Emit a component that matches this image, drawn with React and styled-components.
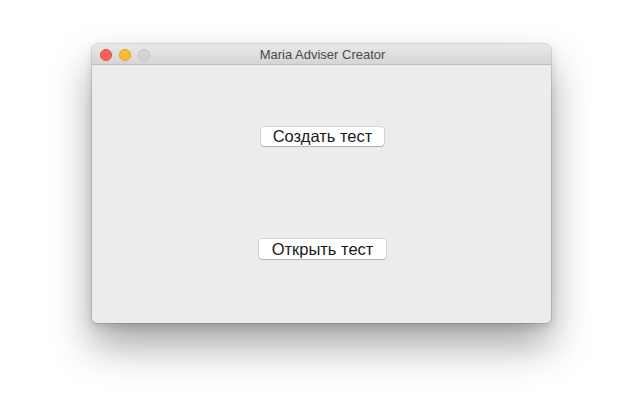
import React from "react";
import styled, { createGlobalStyle } from "styled-components";

const GlobalStyle = createGlobalStyle`
  html, body {
    margin: 0;
    padding: 0;
    background: #ffffff;
  }
  body {
    font-family: "Liberation Sans", Arial, sans-serif;
  }
`;

const Desktop = styled.div`
  width: 643px;
  height: 402px;
  padding: 44px 0 0 92px;
  box-sizing: border-box;
  overflow: hidden;
`;

const Window = styled.div`
  width: 459px;
  height: 279px;
  display: flex;
  flex-direction: column;
  background: #ececec;
  border-radius: 5px;
  box-shadow: 0 0 0 0.5px rgba(0, 0, 0, 0.22), 0 22px 40px rgba(0, 0, 0, 0.36),
    0 4px 10px rgba(0, 0, 0, 0.12);
  overflow: hidden;
`;

const TitleBar = styled.div`
  position: relative;
  height: 20px;
  flex: none;
  display: flex;
  align-items: center;
  justify-content: center;
  background: linear-gradient(#e9e9e9, #d5d5d5);
  border-bottom: 1px solid #bdbdbd;
`;

const Lights = styled.div`
  position: absolute;
  left: 8px;
  top: 5px;
  display: flex;
  gap: 7px;
`;

const Light = styled.span`
  width: 12px;
  height: 12px;
  box-sizing: border-box;
  border-radius: 50%;
  background: ${(p) => p.$fill};
  border: 0.5px solid ${(p) => p.$edge};
`;

const Title = styled.div`
  font-size: 13px;
  color: #4b4b4b;
  padding-left: 2px;
`;

const Content = styled.div`
  flex: 1;
  display: flex;
  flex-direction: column;
  align-items: center;
  padding-top: 62px;
  gap: 93px;
`;

const Button = styled.button`
  height: ${(p) => p.$h}px;
  padding: 0 ${(p) => p.$px}px;
  margin-left: 2px;
  background: #ffffff;
  border: none;
  border-radius: 3px;
  box-shadow: 0 0 0 0.5px rgba(0, 0, 0, 0.18), 0 1px 1px rgba(0, 0, 0, 0.18);
  font-family: "Liberation Sans", Arial, sans-serif;
  font-size: 16.5px;
  color: #1a1a1a;
  line-height: 1;
`;

export default function App() {
  return (
    <>
      <GlobalStyle />
      <Desktop>
        <Window>
          <TitleBar>
            <Lights>
              <Light $fill="#fc5f57" $edge="#df4944" />
              <Light $fill="#fdbc2e" $edge="#dea12a" />
              <Light $fill="#d4d4d4" $edge="#c2c2c2" />
            </Lights>
            <Title>Maria Adviser Creator</Title>
          </TitleBar>
          <Content>
            <Button $h={19} $px={12}>Создать тест</Button>
            <Button $h={20} $px={13}>Открыть тест</Button>
          </Content>
        </Window>
      </Desktop>
    </>
  );
}
